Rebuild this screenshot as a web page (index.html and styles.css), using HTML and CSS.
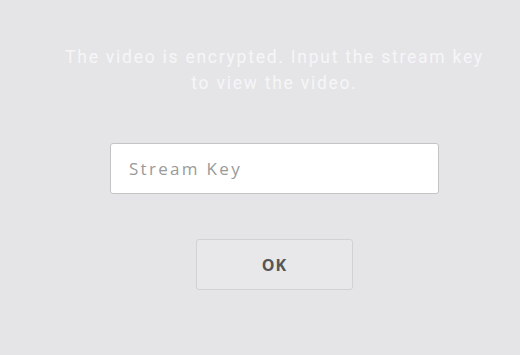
FILE: index.html
```html
<!DOCTYPE html>
<html>
<head>
<meta charset="utf-8">
<link rel="stylesheet" href="styles.css">
</head>
<body>
<div class="wrap">
  <p class="msg">The video is encrypted. Input the stream key<br>to view the video.</p>
  <input class="key" type="text" placeholder="Stream Key">
  <button class="ok" type="button">OK</button>
</div>
</body>
</html>
```
FILE: styles.css
```css
html, body {
  margin: 0;
  padding: 0;
  background: #e5e5e7;
  height: 100%;
}
.wrap {
  display: flex;
  flex-direction: column;
  align-items: center;
  padding: 44px 0 0 29px;
}
.msg {
  margin: 0;
  text-align: center;
  font-family: Roboto, "Liberation Sans", sans-serif;
  font-size: 17.5px;
  line-height: 26px;
  letter-spacing: 1.75px;
  color: #f6f6f8;
}
.key {
  box-sizing: border-box;
  margin-top: 47px;
  width: 329px;
  height: 51px;
  border: 1px solid #c4c4c4;
  border-radius: 3px;
  background: #fff;
  padding: 0 18px;
  font-family: "Open Sans", sans-serif;
  font-size: 17px;
  letter-spacing: 2.3px;
  color: #555;
  outline: none;
}
.key::placeholder {
  color: #9a9a9a;
}
.ok {
  box-sizing: border-box;
  margin-top: 45px;
  width: 157px;
  height: 51px;
  border: 1px solid #d2d2d4;
  border-radius: 3px;
  background: #e8e8ea;
  font-family: "Open Sans", sans-serif;
  font-weight: 700;
  font-size: 16px;
  color: #555;
  letter-spacing: 1px;
}
```
